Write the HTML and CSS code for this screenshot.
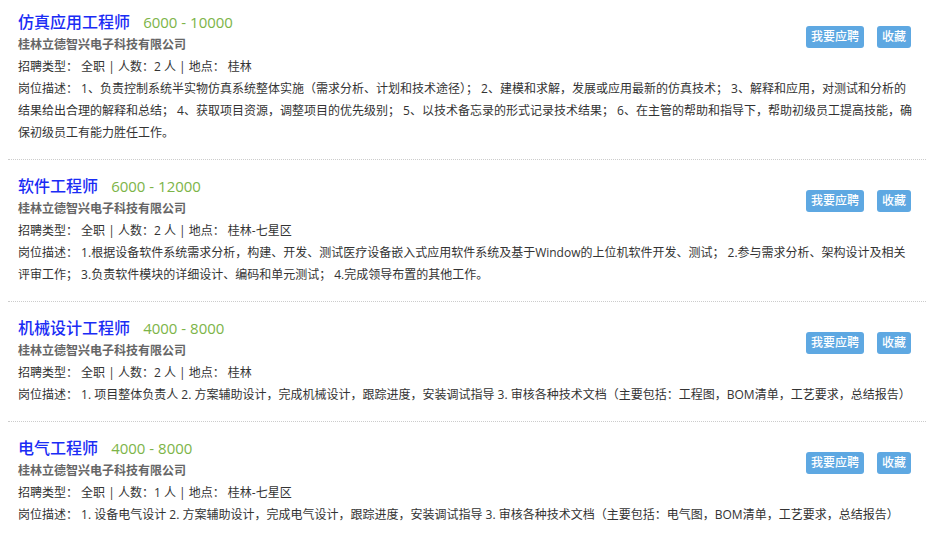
FILE: index.html
```html
<!DOCTYPE html>
<html lang="zh-CN">
<head>
  <meta charset="UTF-8" />
  <meta name="viewport" content="width=device-width, initial-scale=1.0"/>
  <title>招聘职位</title>
  <link rel="stylesheet" href="styles.css">
</head>
<body>
  <div class="job-list">

    <div class="job">
      <div class="actions">
        <a class="btn" href="#">我要应聘</a>
        <a class="btn" href="#">收藏</a>
      </div>
      <div class="job-title">
        <span class="name">仿真应用工程师</span>
        <span class="salary">6000 - 10000</span>
      </div>
      <div class="company">桂林立德智兴电子科技有限公司</div>
      <div class="info">招聘类型： 全职 | 人数：2 人 | 地点： 桂林</div>
      <div class="desc">岗位描述： 1、负责控制系统半实物仿真系统整体实施（需求分析、计划和技术途径）； 2、建模和求解，发展或应用最新的仿真技术； 3、解释和应用，对测试和分析的结果给出合理的解释和总结； 4、获取项目资源，调整项目的优先级别； 5、以技术备忘录的形式记录技术结果； 6、在主管的帮助和指导下，帮助初级员工提高技能，确保初级员工有能力胜任工作。</div>
    </div>

    <div class="job">
      <div class="actions">
        <a class="btn" href="#">我要应聘</a>
        <a class="btn" href="#">收藏</a>
      </div>
      <div class="job-title">
        <span class="name">软件工程师</span>
        <span class="salary">6000 - 12000</span>
      </div>
      <div class="company">桂林立德智兴电子科技有限公司</div>
      <div class="info">招聘类型： 全职 | 人数：2 人 | 地点： 桂林-七星区</div>
      <div class="desc">岗位描述： 1.根据设备软件系统需求分析，构建、开发、测试医疗设备嵌入式应用软件系统及基于Window的上位机软件开发、测试； 2.参与需求分析、架构设计及相关评审工作； 3.负责软件模块的详细设计、编码和单元测试； 4.完成领导布置的其他工作。</div>
    </div>

    <div class="job">
      <div class="actions">
        <a class="btn" href="#">我要应聘</a>
        <a class="btn" href="#">收藏</a>
      </div>
      <div class="job-title">
        <span class="name">机械设计工程师</span>
        <span class="salary">4000 - 8000</span>
      </div>
      <div class="company">桂林立德智兴电子科技有限公司</div>
      <div class="info">招聘类型： 全职 | 人数：2 人 | 地点： 桂林</div>
      <div class="desc">岗位描述： 1. 项目整体负责人 2. 方案辅助设计，完成机械设计，跟踪进度，安装调试指导 3. 审核各种技术文档（主要包括：工程图，BOM清单，工艺要求，总结报告）</div>
    </div>

    <div class="job">
      <div class="actions">
        <a class="btn" href="#">我要应聘</a>
        <a class="btn" href="#">收藏</a>
      </div>
      <div class="job-title">
        <span class="name">电气工程师</span>
        <span class="salary">4000 - 8000</span>
      </div>
      <div class="company">桂林立德智兴电子科技有限公司</div>
      <div class="info">招聘类型： 全职 | 人数：1 人 | 地点： 桂林-七星区</div>
      <div class="desc">岗位描述： 1. 设备电气设计 2. 方案辅助设计，完成电气设计，跟踪进度，安装调试指导 3. 审核各种技术文档（主要包括：电气图，BOM清单，工艺要求，总结报告）</div>
    </div>

  </div>
</body>
</html>
```

FILE: styles.css
```css
* {
  box-sizing: border-box;
}
body {
  margin: 0 8px;
  background: #fff;
  color: #333;
  font-family: "Open Sans", "Noto Sans CJK SC", sans-serif;
  font-size: 12px;
}
.job {
  padding: 14px 11px 15px 10px;
  border-bottom: 1px dotted #ccc;
}
.job:first-child {
  padding-top: 10px;
}
.job:last-child {
  border-bottom: none;
}
.actions {
  float: right;
  display: flex;
  gap: 13px;
  margin-top: 16px;
  margin-right: 4px;
}
.btn {
  display: block;
  height: 22px;
  line-height: 22px;
  padding: 0 5px;
  background: #5ea8e2;
  color: #fff;
  border-radius: 3px;
  text-decoration: none;
  font-size: 12px;
  font-weight: 500;
}
.job-title {
  height: 24px;
  line-height: 24px;
}
.name {
  color: #1a2cf5;
  font-size: 16px;
  font-weight: 500;
}
.salary {
  color: #7cb448;
  font-size: 15px;
  margin-left: 10px;
}
.company {
  line-height: 22px;
  color: #666;
  font-weight: bold;
}
.info,
.desc {
  line-height: 22px;
  color: #333;
}
```
